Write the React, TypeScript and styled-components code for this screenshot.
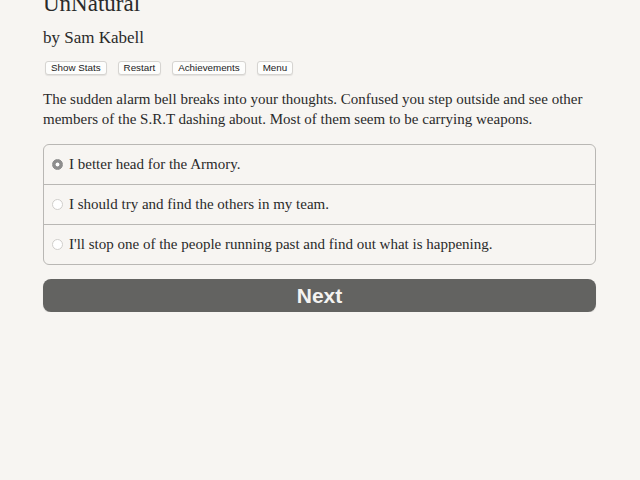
import styled, { createGlobalStyle } from 'styled-components';

const GlobalStyle = createGlobalStyle`
	html, body {
		margin: 0;
		padding: 0;
		background: #f7f5f2;
	}
	body {
		font-family: 'Liberation Serif', 'DejaVu Serif', serif;
		color: #2a2a2a;
	}
`;

const Page = styled.div`
	padding: 0 44px 0 43px;
	margin-top: -10px;
`;

const Title = styled.h1`
	margin: 0;
	font-size: 23px;
	font-weight: normal;
	line-height: 28px;
`;

const Author = styled.h2`
	margin: 9px 0 0;
	font-size: 17px;
	font-weight: normal;
	line-height: 22px;
`;

const Toolbar = styled.div`
	display: flex;
	gap: 11px;
	margin-top: 12px;
	padding-left: 2px;
`;

const ToolButton = styled.button`
	font-family: 'Liberation Sans', Arial, sans-serif;
	font-size: 9.8px;
	line-height: 12px;
	padding: 0 5px;
	height: 14px;
	color: #222;
	background: #fdfdfc;
	border: 1px solid #d6d4d1;
	border-radius: 3px;
	box-shadow: 0 1px 1px rgba(0, 0, 0, 0.08);
`;

const Story = styled.p`
	margin: 14px 0 0;
	font-size: 15px;
	line-height: 20px;
`;

const Choices = styled.div`
	margin-top: 15px;
	border: 1px solid #b9b7b4;
	border-radius: 6px;
	overflow: hidden;
`;

const Choice = styled.label`
	display: flex;
	align-items: center;
	height: 39px;
	padding-left: 8px;
	font-size: 15px;
	& + & {
		border-top: 1px solid #b9b7b4;
	}
`;

const Radio = styled.span<{ $checked?: boolean }>`
	flex: none;
	width: 11px;
	height: 11px;
	margin-right: 6px;
	border-radius: 50%;
	box-sizing: border-box;
	border: 1px solid ${(p) => (p.$checked ? '#8d8d8d' : '#d0cecb')};
	background: ${(p) =>
		p.$checked ? 'radial-gradient(circle, #fff 0 1.6px, #8d8d8d 2.3px)' : '#fff'};
`;

const NextButton = styled.button`
	display: block;
	width: 100%;
	margin-top: 14px;
	height: 33px;
	border: none;
	border-radius: 8px;
	background: #636361;
	color: #f4f3f1;
	font-family: 'Liberation Sans', Arial, sans-serif;
	font-size: 21px;
	font-weight: bold;
	box-shadow: 0 1px 1px rgba(0, 0, 0, 0.15);
`;

const options = [
	'I better head for the Armory.',
	'I should try and find the others in my team.',
	"I'll stop one of the people running past and find out what is happening.",
];

function App() {
	return (
		<>
			<GlobalStyle />
			<Page>
				<Title>UnNatural</Title>
				<Author>by Sam Kabell</Author>
				<Toolbar>
					<ToolButton type='button'>Show Stats</ToolButton>
					<ToolButton type='button'>Restart</ToolButton>
					<ToolButton type='button'>Achievements</ToolButton>
					<ToolButton type='button'>Menu</ToolButton>
				</Toolbar>
				<Story>
					The sudden alarm bell breaks into your thoughts. Confused you step outside and see other
					members of the S.R.T dashing about. Most of them seem to be carrying weapons.
				</Story>
				<Choices>
					{options.map((text, i) => (
						<Choice key={text}>
							<Radio $checked={i === 0} />
							{text}
						</Choice>
					))}
				</Choices>
				<NextButton type='button'>Next</NextButton>
			</Page>
		</>
	);
}

export default App;
